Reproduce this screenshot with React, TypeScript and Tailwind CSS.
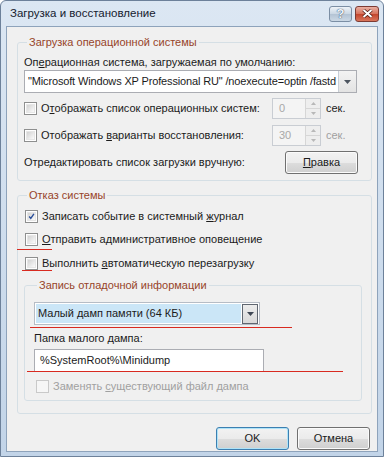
import React from 'react'

const font = "font-['Liberation_Sans',Arial,sans-serif]"

function Check({ checked, disabled }: { checked?: boolean; disabled?: boolean }) {
  return (
    <span
      className={`w-[13px] h-[13px] border flex items-center justify-center shrink-0 ${
        disabled ? 'border-[#c9c9c9] bg-[#f6f6f6]' : 'border-[#8e8f8f] bg-white'
      }`}
    >
      {!disabled && (
        <span className="w-[9px] h-[9px] bg-gradient-to-br from-[#d2d2d2] to-[#fbfbfb] border border-[#e6e6e6] flex items-center justify-center">
          {checked && (
            <svg width="9" height="9" viewBox="0 0 9 9">
              <path d="M1.5 4.5 L3.6 7 L7.6 1.2" fill="none" stroke="#2a4f9a" strokeWidth="1.8" />
            </svg>
          )}
        </span>
      )}
    </span>
  )
}

function Arrow({ color = '#4d5560' }: { color?: string }) {
  return (
    <svg width="7" height="4" viewBox="0 0 7 4">
      <path d="M0 0 H7 L3.5 4 Z" fill={color} />
    </svg>
  )
}

function Spinner({ value }: { value: string }) {
  return (
    <div className="flex h-[21px] w-[49px] border border-[#c9cdd3] bg-[#f4f4f4]">
      <div className="flex-1 pl-[6px] flex items-center text-[#a8a8a8]">{value}</div>
      <div className="w-[15px] flex flex-col border-l border-[#d6d6d6]">
        <div className="flex-1 flex items-center justify-center border-b border-[#d6d6d6] bg-[#eeeeee]">
          <svg width="5" height="3" viewBox="0 0 5 3"><path d="M0 3 H5 L2.5 0 Z" fill="#b8b8b8" /></svg>
        </div>
        <div className="flex-1 flex items-center justify-center bg-[#eeeeee]">
          <svg width="5" height="3" viewBox="0 0 5 3"><path d="M0 0 H5 L2.5 3 Z" fill="#b8b8b8" /></svg>
        </div>
      </div>
    </div>
  )
}

function Button({ children, def }: { children: React.ReactNode; def?: boolean }) {
  return (
    <button
      className={`w-[73px] h-[23px] rounded-[3px] border ${
        def ? 'border-[#3c7fb1] shadow-[inset_0_0_0_1px_#aee3f8]' : 'border-[#707070] shadow-[inset_0_0_0_1px_#fbfbfb]'
      } bg-[linear-gradient(#f2f2f2_0%,#ebebeb_50%,#dddddd_51%,#cfcfcf_100%)] text-[#1b1b1b] flex items-center justify-center`}
    >
      {children}
    </button>
  )
}

function Legend({ children }: { children: React.ReactNode }) {
  return <legend className="ml-[3px] px-[2px] leading-[14px] text-[#97442a]">{children}</legend>
}

export default function App() {
  return (
    <div className={`${font} text-[11px] text-[#1b1b1b] w-[384px] h-[457px] flex flex-col bg-[linear-gradient(#dce7f3,#c2d4e8)] border border-[#6d819a] rounded-t-[6px] overflow-hidden`}>
      {/* Title bar */}
      <div className="h-[25px] shrink-0 flex items-center pl-[9px] pr-[4px]">
        <span className="text-[11.5px] text-[#15202e] flex-1">Загрузка и восстановление</span>
        <div className="flex gap-[3px]">
          <div className="w-[23px] h-[16px] rounded-[3px] border border-[#7b8ea4] bg-[linear-gradient(#eef3f8,#c9d6e3_50%,#b3c3d4_51%,#cbd8e5)] flex items-center justify-center text-[#eef4fa] font-bold text-[13px] [text-shadow:0_0_1px_#3d5069,0_0_1px_#3d5069]">
            ?
          </div>
          <div className="w-[24px] h-[16px] rounded-[3px] border border-[#7d3b33] bg-[linear-gradient(#eab0a2,#d6705a_50%,#c3442c_51%,#d9765c)] flex items-center justify-center">
            <svg width="11" height="9" viewBox="0 0 11 9">
              <path d="M1.5 1 L9.5 8 M9.5 1 L1.5 8" stroke="#4a1a14" strokeWidth="3.4" />
              <path d="M1.5 1 L9.5 8 M9.5 1 L1.5 8" stroke="#ffffff" strokeWidth="2" />
            </svg>
          </div>
        </div>
      </div>

      {/* Body */}
      <div className="relative flex-1 mx-[5px] mb-[4px] border border-[#8ea3bb] bg-[#f0f0f0] pt-[8px] pl-[10px]">
        {/* Boot group */}
        <fieldset className="w-[355px] border border-[#d5dfe5] rounded-[3px] pl-[6px] pr-[13px] pb-[6px]">
          <Legend>Загрузка операционной системы</Legend>
          <div className="mt-[6px] leading-[14px]">
            Оп<u>е</u>рационная система, загружаемая по умолчанию:
          </div>
          <div className="mt-[1px] h-[23px] w-[333px] border border-[#abadb3] bg-white flex items-center">
            <span className="flex-1 pl-[3px] whitespace-nowrap overflow-hidden tracking-[-0.15px]">
              "Microsoft Windows XP Professional RU" /noexecute=optin /fastd
            </span>
            <span className="w-[18px] h-[21px] border-l border-[#c8ced6] bg-[linear-gradient(#f3f3f3,#e3e3e3)] flex items-center justify-center">
              <Arrow />
            </span>
          </div>
          <div className="mt-[5px] flex items-center h-[21px]">
            <Check />
            <span className="ml-[4px] w-[231px] whitespace-nowrap">
              О<u>т</u>ображать список операционных систем:
            </span>
            <Spinner value="0" />
            <span className="ml-[5px]">сек.</span>
          </div>
          <div className="mt-[6px] flex items-center h-[21px]">
            <Check />
            <span className="ml-[4px] w-[231px] whitespace-nowrap">
              Отображать <u>в</u>арианты восстановления:
            </span>
            <Spinner value="30" />
            <span className="ml-[5px] text-[#a0a0a0]">сек.</span>
          </div>
          <div className="mt-[5px] flex items-center h-[23px] justify-between">
            <span>Отредактировать список загрузки вручную:</span>
            <Button>
              <u>П</u>равка
            </Button>
          </div>
        </fieldset>

        {/* Failure group */}
        <fieldset className="mt-[7px] w-[355px] border border-[#d5dfe5] rounded-[3px] pl-[6px] pb-[12px]">
          <Legend>Отказ системы</Legend>
          <div className="mt-[6px] h-[17px] flex items-center pl-[1px]">
            <Check checked />
            <span className="ml-[4px]">
              Записать событие в системный <u>ж</u>урнал
            </span>
          </div>
          <div className="mt-[6px] h-[17px] flex items-center pl-[1px]">
            <Check />
            <span className="ml-[4px]">
              <u>О</u>тправить административное оповещение
            </span>
          </div>
          <div className="mt-[7px] h-[17px] flex items-center pl-[1px]">
            <Check />
            <span className="ml-[4px]">
              Выполнить <u>а</u>втоматическую перезагрузку
            </span>
          </div>

          {/* Debug group */}
          <fieldset className="mt-[6px] w-[338px] border border-[#d5dfe5] rounded-[3px] pl-[9px] pb-[6px]">
            <Legend>Запись отладочной информации</Legend>
            <div className="mt-[10px] h-[23px] w-[226px] border border-[#b6bcc5] bg-white flex items-center p-[1px]">
              <span className="flex-1 h-full bg-[#cbe6f7] flex items-center pl-[2px]">Малый дамп памяти (64 КБ)</span>
              <span className="w-[16px] h-[20px] ml-[1px] border border-[#5f6670] bg-[linear-gradient(#ececec,#d9d9d9)] flex items-center justify-center">
                <Arrow color="#3f4754" />
              </span>
            </div>
            <div className="mt-[6px] leading-[14px]">Папка малого дампа:</div>
            <div className="mt-[4px] h-[23px] w-[230px] border border-[#abadb3] bg-white flex items-center pl-[5px]">
              %SystemRoot%\Minidump
            </div>
            <div className="mt-[6px] h-[16px] flex items-center pl-[2px] text-[#a0a0a0]">
              <Check disabled />
              <span className="ml-[4px]">
                Заменять <u>с</u>уществующий файл дампа
              </span>
            </div>
          </fieldset>
        </fieldset>

        {/* Buttons */}
        <div className="mt-[13px] flex justify-end gap-[8px] pr-[7px]">
          <Button def>OK</Button>
          <Button>Отмена</Button>
        </div>

        {/* Red annotation lines */}
        <div className="absolute left-[10px] top-[222px] w-[35px] h-[1px] bg-[#d82a20]" />
        <div className="absolute left-[15px] top-[243px] w-[30px] h-[1px] bg-[#d82a20]" />
        <div className="absolute left-[23px] top-[300px] w-[262px] h-[1px] bg-[#d82a20]" />
        <div className="absolute left-[20px] top-[344px] w-[316px] h-[1px] bg-[#d82a20]" />
      </div>
    </div>
  )
}
